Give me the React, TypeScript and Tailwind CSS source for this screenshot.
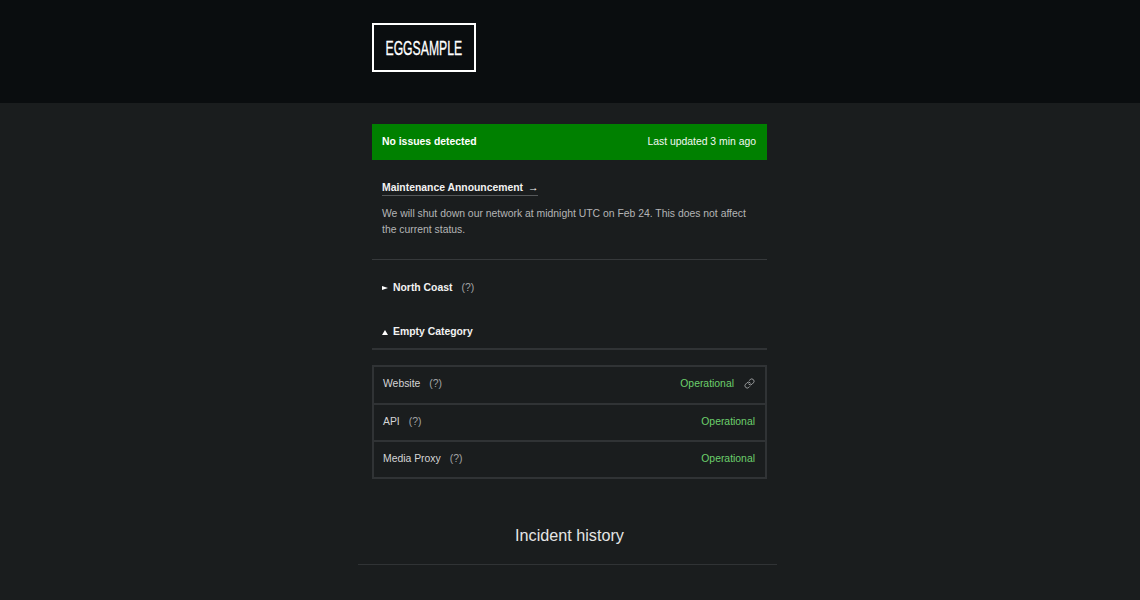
import { Link } from "lucide-react";

const services = [
    { name: "Website", link: true },
    { name: "API", link: false },
    { name: "Media Proxy", link: false },
];

function Hint() {
    return <span className="ml-[9px] text-[#a2a4a5]">(?)</span>;
}

export default function App() {
    return (
        <div className="h-[600px] overflow-hidden bg-[#1a1d1e] font-['Liberation_Sans',Arial,sans-serif] text-[10.4px] text-[#d4d5d6] antialiased">
            <header className="h-[103px] bg-[#0a0d0f] pt-[23px] pr-px">
                <div className="mx-auto w-[395px]">
                    <div className="flex h-[49px] w-[104px] items-center justify-center border-2 border-white text-[20px] text-white">
                        <span className="inline-block scale-x-[0.61] whitespace-nowrap [-webkit-text-stroke:0.3px_white]">EGGSAMPLE</span>
                    </div>
                </div>
            </header>

            <div className="pt-[21px] pr-px">
                <main className="mx-auto w-[395px]">
                    {/* Status banner */}
                    <div className="flex h-9 items-center justify-between bg-[#008000] pr-[11px] pb-px pl-[10px] text-[#f2f8f2]">
                        <span className="font-bold text-white">No issues detected</span>
                        <span>Last updated 3 min ago</span>
                    </div>

                    <section className="border-b border-[#36393b] px-[10px] pt-[20px] pb-[22px]">
                        <a className="inline-block border-b border-[#55585a] leading-[14px] font-bold text-[#f2f2f2]">
                            Maintenance Announcement <span className="ml-[2px]">→</span>
                        </a>
                        <p className="mt-[10px] leading-[15.5px] text-[#b4b5b6]">
                            We will shut down our network at midnight UTC on Feb 24. This does not affect the current status.
                        </p>
                    </section>

                    <div className="flex h-[56px] items-center px-[10px]">
                        <svg viewBox="0 0 6 4" className="mr-[5px] h-1 w-[6px] fill-white">
                            <path d="M0 0L6 2L0 4Z" />
                        </svg>
                        <span className="font-bold text-[#f2f2f2]">North Coast</span>
                        <Hint />
                    </div>

                    <div className="flex h-[34px] items-center border-b-2 border-[#303335] px-[10px]">
                        <svg viewBox="0 0 6 5" className="mr-[5px] h-[5px] w-[6px] fill-white">
                            <path d="M3 0L6 5H0Z" />
                        </svg>
                        <span className="font-bold text-[#f2f2f2]">Empty Category</span>
                    </div>

                    {/* Services */}
                    <div className="mt-[15px] border-2 border-[#303335]">
                        {services.map((s, i) => (
                            <div
                                key={s.name}
                                className={`flex items-center justify-between pr-[10px] pb-[2px] pl-[9px] ${i > 0 ? "h-[37px] border-t-2 border-[#303335]" : "h-[36px]"}`}
                            >
                                <span>
                                    {s.name}
                                    <Hint />
                                </span>
                                <span className="flex items-center text-[#6ccf6c]">
                                    Operational
                                    <span className={s.link ? "ml-[10px] text-[#a2a4a5]" : "hidden"}>
                                        <Link className="h-[11px] w-[11px]" />
                                    </span>
                                </span>
                            </div>
                        ))}
                    </div>

                    <h2 className="mt-[46px] text-center text-[16.2px] leading-5 text-[#e4e5e5]">Incident history</h2>
                    <div className="mt-[19px] mr-[-10px] ml-[-14px] border-t border-[#303335]" />
                </main>
            </div>
        </div>
    );
}
